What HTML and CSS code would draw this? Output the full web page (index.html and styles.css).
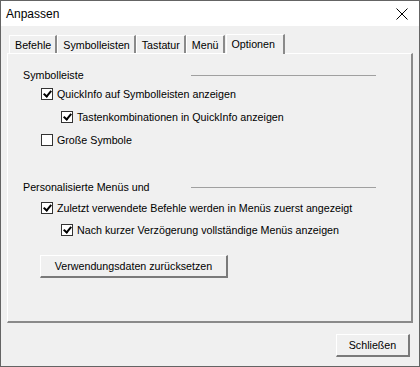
FILE: index.html
```html
<!DOCTYPE html>
<html lang="de">
<head>
<meta charset="utf-8">
<title>Anpassen</title>
<link rel="stylesheet" href="styles.css">
</head>
<body>
<div class="window">
  <div class="titlebar">
    <span class="title">Anpassen</span>
    <svg class="close" width="12" height="12" viewBox="0 0 12 12"><path d="M0.5 0.5 L11.5 11.5 M11.5 0.5 L0.5 11.5" stroke="#000" stroke-width="1" fill="none"/></svg>
  </div>
  <div class="body">
    <div class="tabs">
      <div class="tab">Befehle</div>
      <div class="tab">Symbolleisten</div>
      <div class="tab">Tastatur</div>
      <div class="tab">Menü</div>
      <div class="tab active">Optionen</div>
    </div>
    <div class="panel">
      <div class="group-head first"><span>Symbolleiste</span><span class="rule"></span></div>
      <div class="check lvl1"><span class="box checked"></span><span>QuickInfo auf Symbolleisten anzeigen</span></div>
      <div class="check lvl2"><span class="box checked"></span><span>Tastenkombinationen in QuickInfo anzeigen</span></div>
      <div class="check lvl1"><span class="box"></span><span>Große Symbole</span></div>
      <div class="group-head second"><span>Personalisierte Menüs und</span><span class="rule"></span></div>
      <div class="check lvl1"><span class="box checked"></span><span>Zuletzt verwendete Befehle werden in Menüs zuerst angezeigt</span></div>
      <div class="check lvl2"><span class="box checked"></span><span>Nach kurzer Verzögerung vollständige Menüs anzeigen</span></div>
      <button class="btn reset">Verwendungsdaten zurücksetzen</button>
    </div>
    <div class="footer">
      <button class="btn close-btn">Schließen</button>
    </div>
  </div>
</div>
</body>
</html>
```
FILE: styles.css
```css
* { box-sizing: border-box; }
html, body { margin: 0; padding: 0; }
body {
  font-family: "Liberation Sans", Arial, sans-serif;
  font-size: 10.7px;
  color: #000;
  background: #fff;
}
.window {
  width: 420px;
  height: 367px;
  border: 1px solid #646464;
  background: #f0f0f0;
  display: flex;
  flex-direction: column;
}
.titlebar {
  height: 25px;
  background: #fff;
  display: flex;
  align-items: center;
  justify-content: space-between;
  padding: 0 11px 0 5px;
}
.title { font-size: 12px; }
.body {
  flex: 1;
  display: flex;
  flex-direction: column;
  padding: 7px 6px 0 6px;
}
.tabs {
  display: flex;
  align-items: flex-end;
  height: 20px;
  padding-left: 2px;
}
.tab {
  height: 18px;
  padding: 0 4px 0 5px;
  display: flex;
  align-items: center;
  border-top: 1px solid #fff;
  border-left: 1px solid #fff;
  border-right: 2px solid #8a8a8a;
  border-top-left-radius: 1px;
  white-space: nowrap;
}
.tab.active {
  height: 20px;
  padding: 0 8px 2px 5px;
  margin-left: 1px;
  margin-bottom: -1px;
  position: relative;
  background: #f0f0f0;
  z-index: 1;
}
.panel {
  height: 270px;
  border-top: 1px solid #fff;
  border-left: 1px solid #fff;
  border-right: 2px solid #8a8a8a;
  border-bottom: 2px solid #8a8a8a;
  padding-left: 15px;
  display: flex;
  flex-direction: column;
  align-items: flex-start;
}
.group-head {
  display: grid;
  grid-template-columns: 168px 185px;
  align-items: center;
  height: 14px;
}
.group-head.first { margin-top: 14px; }
.group-head.second { margin-top: 29px; margin-bottom: 3px; }
.rule { height: 1px; background: #a0a0a0; }
.check {
  display: flex;
  align-items: center;
  gap: 4px;
  height: 23px;
  white-space: nowrap;
}
.check.lvl1 { margin-left: 18px; }
.check.lvl2 { margin-left: 38px; }
.second ~ .check { height: 22px; }
.box {
  width: 12px;
  height: 12px;
  border: 1px solid #333;
  background: #fff;
  position: relative;
}
.box.checked::after {
  content: "";
  position: absolute;
  top: 0px;
  left: 3px;
  width: 3px;
  height: 6px;
  border-right: 2px solid #000;
  border-bottom: 2px solid #000;
  transform: rotate(40deg);
  transform-origin: center;
}
.btn {
  font-family: inherit;
  font-size: 10.7px;
  color: #000;
  background: #f0f0f0;
  border-top: 1px solid #fff;
  border-left: 1px solid #fff;
  border-right: 2px solid #7a7a7a;
  border-bottom: 2px solid #7a7a7a;
  padding: 0;
  margin: 0;
}
.reset {
  margin-top: 14px;
  margin-left: 17px;
  width: 188px;
  height: 23px;
}
.footer {
  display: flex;
  justify-content: flex-end;
  padding-top: 11px;
  padding-right: 3px;
}
.close-btn {
  width: 74px;
  height: 23px;
}
```
